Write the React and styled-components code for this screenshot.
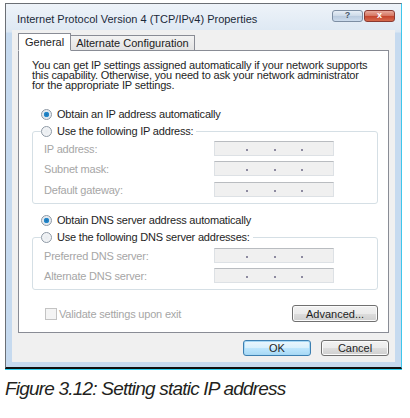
import React from "react";
import styled, { createGlobalStyle } from "styled-components";

const Global = createGlobalStyle`
    html, body { margin: 0; padding: 0; background: #ffffff; }
    body { font-family: "Liberation Sans", Arial, sans-serif; }
`

const Page = styled.div`
    width: 410px;
    height: 418px;
    padding: 3px 0 0 5px;
    box-sizing: border-box;
`

// outer vista frame
const Window = styled.div`
    width: 397px;
    height: 366px;
    box-sizing: border-box;
    border: 1px solid #6b6f75;
    border-right: 1px solid #3ec6ec;
    border-bottom: 2px solid #111;
    box-shadow: 0 1px 0 #2fd0f0;
    background: linear-gradient(to bottom, #eef3f9 0px, #dde8f3 28px, #c6daef 29px, #c6daef 100%);
    display: flex;
    flex-direction: column;
`

const TitleBar = styled.div`
    height: 26px;
    display: flex;
    align-items: center;
    justify-content: space-between;
    padding: 3px 6px 0 11px;
    box-sizing: border-box;
`

const Title = styled.span`
    font-size: 11px;
    color: #1b2a3a;
`

const CaptionButtons = styled.div`
    display: flex;
    gap: 1px;
    margin-top: -6px;
`

const CapBtn = styled.div`
    width: 31px;
    height: 12px;
    box-sizing: border-box;
    border: 1px solid ${p => p.$close ? "#8a3a32" : "#7d8ea3"};
    border-radius: 3px;
    background: ${p => p.$close
        ? "linear-gradient(to bottom, #e9a99c 0%, #d4745f 50%, #c4432c 51%, #d66a4d 100%)"
        : "linear-gradient(to bottom, #e7eef6 0%, #ccd9e7 50%, #b9cadd 51%, #cddced 100%)"};
    display: flex;
    align-items: center;
    justify-content: center;
    font-size: 9px;
    font-weight: bold;
    color: ${p => p.$close ? "#fff" : "#4a5a6c"};
    line-height: 1;
`

const Client = styled.div`
    flex: 1;
    margin: 0 6px 5px 6px;
    background: #f0f0f0;
    padding: 2px 6px 0 6px;
    display: flex;
    flex-direction: column;
`

const Tabs = styled.div`
    display: flex;
    align-items: flex-end;
    height: 18px;
    position: relative;
    z-index: 1;
`

const Tab = styled.div`
    box-sizing: border-box;
    height: ${p => p.$active ? "18px" : "16px"};
    padding: 0 ${p => p.$active ? "6px" : "5px"};
    border: 1px solid #898c95;
    border-bottom: ${p => p.$active ? "1px solid #fff" : "1px solid #898c95"};
    border-left: ${p => p.$active ? "1px solid #898c95" : "none"};
    background: ${p => p.$active ? "#fff" : "linear-gradient(to bottom, #f3f3f3, #e3e3e3)"};
    font-size: 11px;
    color: #222;
    display: flex;
    align-items: center;
    margin-bottom: -1px;
`

const Panel = styled.div`
    height: 283px;
    box-sizing: border-box;
    background: #fff;
    border: 1px solid #898c95;
    padding: 9px 10px 0 13px;
    display: flex;
    flex-direction: column;
`

const Intro = styled.p`
    margin: 0;
    width: 339px;
    font-size: 11px;
    line-height: 10px;
    color: #1e1e1e;
    letter-spacing: -0.15px;
`

const OptionRow = styled.label`
    display: flex;
    align-items: center;
    height: 14px;
    gap: 5px;
    font-size: 11px;
    color: #1e1e1e;
    margin: ${p => p.$top || 0}px 0 0 9px;
    letter-spacing: -0.2px;
`

const RadioDot = styled.span`
    width: 11px;
    height: 11px;
    box-sizing: border-box;
    border-radius: 50%;
    border: 1px solid #8e99a5;
    background: ${p => p.$checked
        ? "radial-gradient(circle, #1a6fb0 0, #2a8fd0 2.5px, #dfe6ee 3px, #f4f6f8 100%)"
        : "radial-gradient(circle, #e8ecf0 0, #f7f8f9 100%)"};
    flex-shrink: 0;
`

const Group = styled.fieldset`
    margin: ${p => p.$top || 0}px 0 0 0;
    padding: 0 0 6px 11px;
    border: 1px solid #d5dfe5;
    border-radius: 3px;
    min-width: 0;
`

const Legend = styled.legend`
    padding: 0 3px 0 0;
    margin-left: -3px;
`

const LegendRow = styled(OptionRow)`
    margin: 0;
`

const FieldRow = styled.div`
    display: flex;
    align-items: center;
    justify-content: space-between;
    height: 15px;
    margin-top: ${p => p.$top}px;
    padding-right: 43px;
`

const FieldLabel = styled.span`
    font-size: 11px;
    color: #a6a6a6;
    letter-spacing: -0.2px;
`

const IpBox = styled.div`
    width: 120px;
    height: 15px;
    box-sizing: border-box;
    background: #f0f0f0;
    border: 1px solid #dde1e5;
    border-top-color: #b9bcc0;
    display: flex;
    align-items: center;
    justify-content: space-between;
    padding: 3px 30px 0 31px;
`

const Dot = styled.span`
    width: 2px;
    height: 2px;
    background: #8d8aa0;
`

const Footer = styled.div`
    display: flex;
    align-items: center;
    justify-content: space-between;
    margin-top: 15px;
    padding: 0 0 0 13px;
`

const CheckRow = styled.label`
    display: flex;
    align-items: center;
    gap: 2px;
    font-size: 11px;
    color: #a6a6a6;
    letter-spacing: -0.2px;
`

const CheckBox = styled.span`
    width: 12px;
    height: 12px;
    box-sizing: border-box;
    border: 1px solid #c3c3c3;
    background: #f4f4f4;
`

const Button = styled.div`
    width: ${p => p.$w || 68}px;
    height: ${p => p.$h || 16}px;
    box-sizing: border-box;
    border: 1px solid ${p => p.$default ? "#3c7fb1" : "#707070"};
    border-radius: 3px;
    background: ${p => p.$default
        ? "linear-gradient(to bottom, #eaf6fd 0%, #d9f0fc 50%, #bee6fd 51%, #a7d9f5 100%)"
        : "linear-gradient(to bottom, #f2f2f2 0%, #ebebeb 50%, #dddddd 51%, #cfcfcf 100%)"};
    box-shadow: inset 0 0 0 1px ${p => p.$default ? "#a6d8f5" : "#fbfbfb"};
    display: flex;
    align-items: center;
    justify-content: center;
    font-size: 11px;
    color: #1e1e1e;
`

const ButtonBar = styled.div`
    display: flex;
    justify-content: flex-end;
    gap: 10px;
    margin-top: 7px;
`

const Caption = styled.div`
    margin-top: 9px;
    font-family: "Liberation Sans", Arial, sans-serif;
    font-style: italic;
    font-size: 19px;
    color: #231f20;
    letter-spacing: -0.8px;
`

const IpField = () => (
    <IpBox><Dot /><Dot /><Dot /></IpBox>
)

const App = () => {
    return (
        <Page>
            <Global />
            <Window>
                <TitleBar>
                    <Title>Internet Protocol Version 4 (TCP/IPv4) Properties</Title>
                    <CaptionButtons>
                        <CapBtn>?</CapBtn>
                        <CapBtn $close>x</CapBtn>
                    </CaptionButtons>
                </TitleBar>
                <Client>
                    <Tabs>
                        <Tab $active>General</Tab>
                        <Tab>Alternate Configuration</Tab>
                    </Tabs>
                    <Panel>
                        <Intro>
                            You can get IP settings assigned automatically if your network supports
                            this capability. Otherwise, you need to ask your network administrator
                            for the appropriate IP settings.
                        </Intro>
                        <OptionRow $top={17}><RadioDot $checked />Obtain an IP address automatically</OptionRow>
                        <Group $top={3}>
                            <Legend><LegendRow><RadioDot />Use the following IP address:</LegendRow></Legend>
                            <FieldRow $top={3}><FieldLabel>IP address:</FieldLabel><IpField /></FieldRow>
                            <FieldRow $top={5}><FieldLabel>Subnet mask:</FieldLabel><IpField /></FieldRow>
                            <FieldRow $top={6}><FieldLabel>Default gateway:</FieldLabel><IpField /></FieldRow>
                        </Group>
                        <OptionRow $top={9}><RadioDot $checked />Obtain DNS server address automatically</OptionRow>
                        <Group $top={3}>
                            <Legend><LegendRow><RadioDot />Use the following DNS server addresses:</LegendRow></Legend>
                            <FieldRow $top={4}><FieldLabel>Preferred DNS server:</FieldLabel><IpField /></FieldRow>
                            <FieldRow $top={5}><FieldLabel>Alternate DNS server:</FieldLabel><IpField /></FieldRow>
                        </Group>
                        <Footer>
                            <CheckRow><CheckBox />Validate settings upon exit</CheckRow>
                            <Button $w={86} $h={17}>Advanced...</Button>
                        </Footer>
                    </Panel>
                    <ButtonBar>
                        <Button $default>OK</Button>
                        <Button>Cancel</Button>
                    </ButtonBar>
                </Client>
            </Window>
            <Caption>Figure 3.12: Setting static IP address</Caption>
        </Page>
    )
}

export default App;
